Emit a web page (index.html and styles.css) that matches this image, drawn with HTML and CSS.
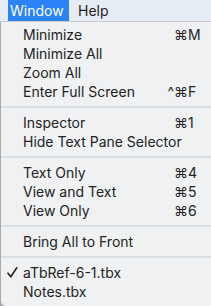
FILE: index.html
```html
<!DOCTYPE html>
<html>
<head>
<meta charset="utf-8">
<link rel="stylesheet" href="styles.css">
</head>
<body>
<div class="menubar">
  <span class="mb-item active">Window</span>
  <span class="mb-item">Help</span>
</div>
<div class="menu">
  <div class="row"><span class="chk"></span><span class="label">Minimize</span><span class="mod">⌘</span><span class="key">M</span></div>
  <div class="row"><span class="chk"></span><span class="label">Minimize All</span><span class="mod"></span><span class="key"></span></div>
  <div class="row"><span class="chk"></span><span class="label">Zoom All</span><span class="mod"></span><span class="key"></span></div>
  <div class="row"><span class="chk"></span><span class="label">Enter Full Screen</span><span class="mod">^⌘</span><span class="key">F</span></div>
  <div class="sep"></div>
  <div class="row"><span class="chk"></span><span class="label">Inspector</span><span class="mod">⌘</span><span class="key">1</span></div>
  <div class="row"><span class="chk"></span><span class="label">Hide Text Pane Selector</span><span class="mod"></span><span class="key"></span></div>
  <div class="sep"></div>
  <div class="row"><span class="chk"></span><span class="label">Text Only</span><span class="mod">⌘</span><span class="key">4</span></div>
  <div class="row"><span class="chk"></span><span class="label">View and Text</span><span class="mod">⌘</span><span class="key">5</span></div>
  <div class="row"><span class="chk"></span><span class="label">View Only</span><span class="mod">⌘</span><span class="key">6</span></div>
  <div class="sep"></div>
  <div class="row"><span class="chk"></span><span class="label">Bring All to Front</span><span class="mod"></span><span class="key"></span></div>
  <div class="sep"></div>
  <div class="row"><span class="chk"><svg width="11" height="11" viewBox="0 0 11 11"><path d="M1 6.2 L3.8 9.8 L9.8 0.8" fill="none" stroke="#232323" stroke-width="1.6" stroke-linecap="round" stroke-linejoin="round"/></svg></span><span class="label">aTbRef-6-1.tbx</span><span class="mod"></span><span class="key"></span></div>
  <div class="row"><span class="chk"></span><span class="label">Notes.tbx</span><span class="mod"></span><span class="key"></span></div>
</div>
</body>
</html>
```
FILE: styles.css
```css
html, body {
  margin: 0;
  padding: 0;
}
body {
  width: 211px;
  height: 306px;
  overflow: hidden;
  background: #a9abae;
  font-family: "Inter", "Roboto", "Liberation Sans", sans-serif;
  font-size: 14px;
  color: #232323;
}
.menubar {
  height: 21px;
  background: #e6ecf3;
  border-bottom: 1px solid #c9cbce;
  display: flex;
  padding-left: 8px;
}
.mb-item {
  display: flex;
  align-items: center;
  height: 21px;
  padding-left: 9px;
}
.mb-item.active {
  background: #2b83f6;
  color: #ffffff;
  width: 61px;
  padding-left: 2px;
  box-sizing: border-box;
}
.menu {
  margin-left: 1px;
  height: 284px;
  background: #eff1f3;
  border-bottom-left-radius: 5px;
  padding-top: 3px;
  box-sizing: border-box;
}
.row {
  display: grid;
  grid-template-columns: 22px 140px 25px 1fr;
  height: 19px;
  line-height: 19px;
  align-items: center;
}
.chk {
  padding-left: 6px;
  display: flex;
  align-items: center;
  height: 19px;
}
.label {
  white-space: nowrap;
}
.mod {
  text-align: right;
}
.sep {
  height: 12px;
  display: flex;
  align-items: center;
}
.sep::after {
  content: "";
  display: block;
  width: 100%;
  height: 2px;
  background: #dcdfe2;
}
```
